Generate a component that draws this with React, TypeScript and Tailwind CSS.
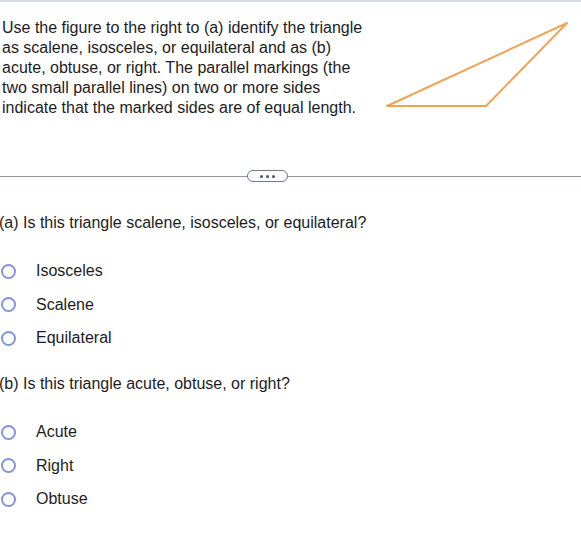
const Radio = ({ label }: { label: string }) => {
  return (
    <label className="flex items-center h-[20px]">
      <span className="w-[15px] h-[15px] rounded-full border-2 border-[#8393dc] ml-[1px]" />
      <span className="ml-[20px]">{label}</span>
    </label>
  );
};

const App = () => {
  return (
    <div className="w-[581px] h-[555px] bg-white border-t-2 border-[#d7dbe4] text-[16px] leading-[20px] text-[#1c1c1c] font-['Liberation_Sans',Arial,sans-serif] overflow-hidden">
      <div className="flex h-[120px]">
        <p className="w-[372px] pl-[2px] pt-[16px]">
          Use the figure to the right to (a) identify the triangle as scalene, isosceles, or equilateral and as (b) acute, obtuse, or right. The parallel markings (the two small parallel lines) on two or more sides indicate that the marked sides are of equal length.
        </p>
        <svg width="209" height="120" viewBox="0 0 209 120">
          <polygon points="15,104 114,104 195,21" fill="none" stroke="#f0a556" strokeWidth="2" strokeLinejoin="round" />
        </svg>
      </div>

      <div className="relative mt-[54px] h-px bg-[#8d95a4]">
        <div className="absolute left-[247px] top-[-6px] w-[41px] h-[12px] rounded-full border border-[#6f7685] bg-white flex items-center justify-center gap-[3px]">
          <span className="w-[3px] h-[3px] rounded-full bg-[#4b5262]" />
          <span className="w-[3px] h-[3px] rounded-full bg-[#4b5262]" />
          <span className="w-[3px] h-[3px] rounded-full bg-[#4b5262]" />
        </div>
      </div>

      <p className="mt-[36px] ml-[-1px]">(a) Is this triangle scalene, isosceles, or equilateral?</p>
      <div className="mt-[28px] flex flex-col gap-[13.5px]">
        <Radio label="Isosceles" />
        <Radio label="Scalene" />
        <Radio label="Equilateral" />
      </div>

      <p className="mt-[26px] ml-[-1px]">(b) Is this triangle acute, obtuse, or right?</p>
      <div className="mt-[28px] flex flex-col gap-[13.5px]">
        <Radio label="Acute" />
        <Radio label="Right" />
        <Radio label="Obtuse" />
      </div>
    </div>
  );
};

export default App;
